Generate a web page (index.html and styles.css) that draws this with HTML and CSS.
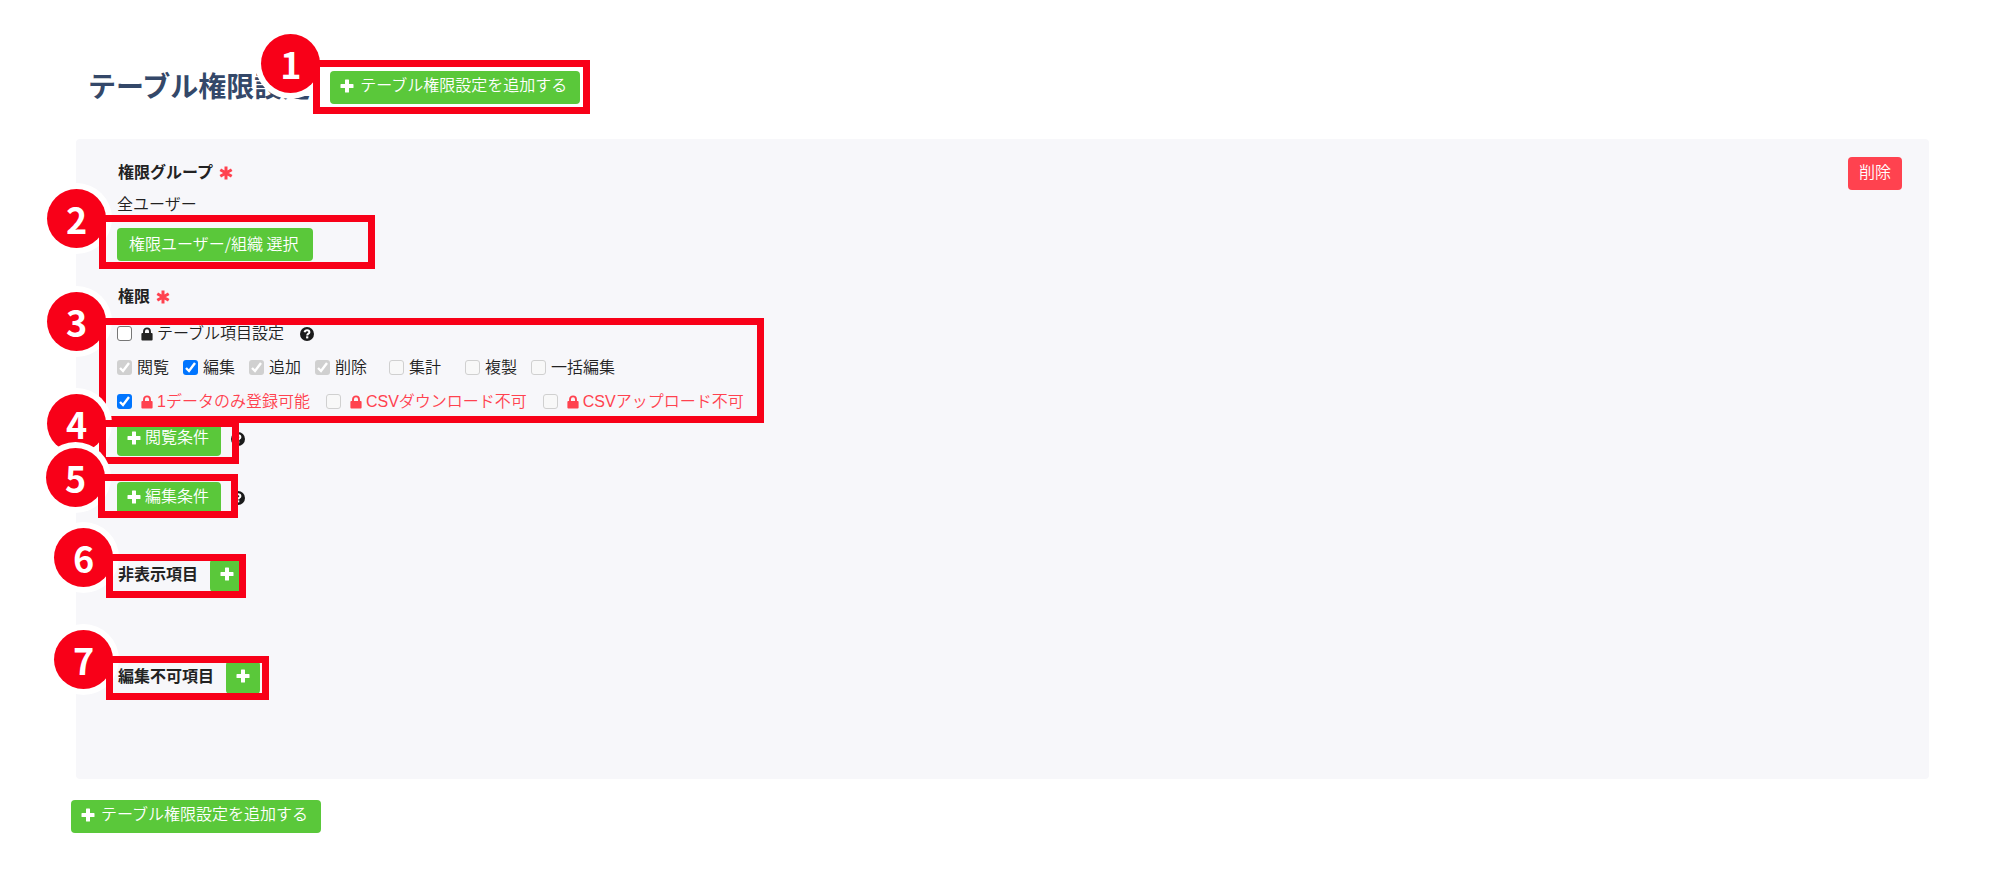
FILE: index.html
```html
<!DOCTYPE html>
<html lang="ja">
<head>
    <meta charset="UTF-8">
    <meta name="viewport" content="width=device-width, initial-scale=1.0">
    <title>テーブル権限設定</title>
    <link rel="stylesheet" href="styles.css">
</head>
<body>

    <svg class="sprite" aria-hidden="true">
        <symbol id="plus" viewBox="0 0 14 14">
            <path d="M5.6 .5h2.8q.6 0 .6.6V5h3.9q.6 0 .6.6v2.8q0 .6-.6.6H9v3.900q0 .6-.6.6H5.600q-.6 0-.6-.6V9H1.100q-.6 0-.6-.6V5.600q0-.6.6-.6H5V1.100q0-.6.6-.6z"/>
        </symbol>
        <symbol id="asterisk" viewBox="0 0 14 14">
            <path d="M7 .5v13M1.300 3.700l11.400 6.600M12.700 3.700L1.300 10.300" fill="none" stroke="currentColor" stroke-width="3"/>
        </symbol>
        <symbol id="lock" viewBox="0 0 12 14">
            <path d="M1.400 6h9.200q1 0 1 1v5.400q0 1-1 1H1.400q-1 0-1-1V7q0-1 1-1z"/>
            <path d="M3 6.500V4.400a3 3 0 0 1 6 0v2.100" fill="none" stroke="currentColor" stroke-width="1.900"/>
        </symbol>
        <symbol id="help" viewBox="0 0 14 14">
            <circle cx="7" cy="7" r="7"/>
            <path d="M4.600 5.200C4.900 3.900 5.900 3.300 7.100 3.300c1.300 0 2.300.8 2.300 1.900C9.400 6.700 7.200 6.600 7.200 8.400" fill="none" stroke="#fff" stroke-width="2"/>
            <rect x="6.100" y="9.300" width="2.200" height="2.100" fill="#fff"/>
        </symbol>
    </svg>

    <header class="page-header">
        <h1>テーブル権限設定</h1>
        <div class="target">
            <button type="button" class="btn btn-add"><svg class="icon"><use href="#plus"/></svg>テーブル権限設定を追加する</button>
            <div class="callout callout-add"><span class="badge">1</span></div>
        </div>
    </header>

    <main class="panel">
        <div class="fields">
            <h2 class="label">権限グループ<svg class="icon required"><use href="#asterisk"/></svg></h2>
            <p class="group-name">全ユーザー</p>
            <div class="target select-group">
                <button type="button" class="btn">権限ユーザー/組織 選択</button>
                <div class="callout callout-group"><span class="badge">2</span></div>
            </div>

            <h2 class="label label-perm">権限<svg class="icon required"><use href="#asterisk"/></svg></h2>
            <div class="target perms">
                <div class="row">
                    <label class="check locked"><input type="checkbox"><svg class="icon lock"><use href="#lock"/></svg>テーブル項目設定</label>
                    <svg class="icon help"><use href="#help"/></svg>
                </div>
                <div class="row">
                    <label class="check"><input type="checkbox" checked disabled>閲覧</label>
                    <label class="check"><input type="checkbox" checked>編集</label>
                    <label class="check"><input type="checkbox" checked disabled>追加</label>
                    <label class="check wide"><input type="checkbox" checked disabled>削除</label>
                    <label class="check wide"><input type="checkbox" disabled>集計</label>
                    <label class="check"><input type="checkbox" disabled>複製</label>
                    <label class="check"><input type="checkbox" disabled>一括編集</label>
                </div>
                <div class="row danger">
                    <label class="check locked"><input type="checkbox" checked><svg class="icon lock"><use href="#lock"/></svg>1データのみ登録可能</label>
                    <label class="check locked"><input type="checkbox" disabled><svg class="icon lock"><use href="#lock"/></svg>CSVダウンロード不可</label>
                    <label class="check locked"><input type="checkbox" disabled><svg class="icon lock"><use href="#lock"/></svg>CSVアップロード不可</label>
                </div>
                <div class="callout callout-perms"><span class="badge">3</span></div>
            </div>

            <div class="target condition view">
                <button type="button" class="btn"><svg class="icon"><use href="#plus"/></svg>閲覧条件</button>
                <svg class="icon help"><use href="#help"/></svg>
                <div class="callout callout-view"><span class="badge">4</span></div>
            </div>
            <div class="target condition edit">
                <button type="button" class="btn"><svg class="icon"><use href="#plus"/></svg>編集条件</button>
                <svg class="icon help"><use href="#help"/></svg>
                <div class="callout callout-edit"><span class="badge">5</span></div>
            </div>

            <div class="target item hidden-items">
                <h2 class="label">非表示項目</h2>
                <button type="button" class="btn" aria-label="追加"><svg class="icon"><use href="#plus"/></svg></button>
                <div class="callout callout-hidden"><span class="badge">6</span></div>
            </div>
            <div class="target item readonly-items">
                <h2 class="label">編集不可項目</h2>
                <button type="button" class="btn" aria-label="追加"><svg class="icon"><use href="#plus"/></svg></button>
                <div class="callout callout-readonly"><span class="badge">7</span></div>
            </div>
        </div>
        <button type="button" class="btn btn-delete">削除</button>
    </main>

    <button type="button" class="btn btn-add btn-bottom"><svg class="icon"><use href="#plus"/></svg>テーブル権限設定を追加する</button>

</body>
</html>
```

FILE: styles.css
```css
* { box-sizing: border-box; }
body { margin: 0; padding: 71px 71px 0; background: #fff; color: #222; font-family: "Liberation Sans", "Noto Sans CJK JP", sans-serif; font-size: 16px; font-weight: 350; line-height: 32px; }
h1, h2, p { margin: 0; }

.sprite { display: none; }
.icon { width: 14px; height: 14px; flex: none; fill: currentColor; }

.page-header { display: flex; align-items: center; gap: 20px; height: 33px; padding-left: 17px; }
.page-header h1 { color: #344869; font-size: 28px; font-weight: bold; white-space: nowrap; }

.btn { display: inline-flex; align-items: center; gap: 4px; height: 33px; padding: 0 12px 2px 10px; border: none; border-radius: 4px; background: #5ac83a; color: #fff; font: inherit; white-space: nowrap; cursor: pointer; }
.btn-add { gap: 6px; padding-right: 13px; }
.btn-delete { padding: 0 11px 2px; background: #ff424f; }
.btn-bottom { margin-top: 21px; }

.panel { display: flex; justify-content: space-between; align-items: flex-start; margin: 35px 0 0 5px; padding: 18px 27px 85px 41px; border-radius: 4px; background: #f7f7fa; }
.label { display: flex; align-items: center; gap: 6px; padding-left: 1px; font-size: 16px; font-weight: bold; }
.required { color: #ff424f; }
.select-group { margin-top: 6px; font-family: "Noto Sans CJK JP", sans-serif; }
.select-group .btn { padding: 0 14px 2px 12px; }
.label-perm { margin-top: 20px; }
.perms { margin-top: 4px; }

.row { display: flex; align-items: center; gap: 14px; height: 34px; }
.row .help { margin-left: 2px; }
.danger { gap: 16px; color: #ff424f; }
.check { display: flex; align-items: center; gap: 5px; }
.locked { gap: 4px; }
.locked input { margin-right: 5px; }
.wide + .wide { margin: 0 10px 0 8px; }
.lock { width: 12px; }
.help { color: #1a1a1a; }

input { appearance: none; width: 15px; height: 15px; margin: 0; border: 1px solid #767676; border-radius: 3px; background: #fff center / 15px 15px no-repeat; }
input:checked { border: none; background-color: #0075ff; background-image: url("data:image/svg+xml,%3Csvg xmlns='http://www.w3.org/2000/svg' viewBox='0 0 15 15'%3E%3Cpath d='M3 8l3 3 6-8' fill='none' stroke='%23fff' stroke-width='2.400'/%3E%3C/svg%3E"); }
input:disabled { border-color: #d0d0d0; background-color: #f8f8f8; }
input:disabled:checked { background-color: #d0d0d0; }

.condition { display: flex; align-items: center; gap: 10px; }
.view { margin-top: 4px; }
.edit { margin-top: 26px; }
.item { display: flex; align-items: center; gap: 12px; }
.item .btn { padding: 0 10px 2px; }
.hidden-items { margin-top: 44px; }
.readonly-items { margin-top: 69px; }

/* numbered callouts */
.target { position: relative; width: fit-content; }
.callout { position: absolute; pointer-events: none; }
.callout::after { content: ""; position: absolute; inset: 0; border: 7px solid #f80018; }
.badge { position: absolute; top: -26px; left: -52px; width: 59px; height: 59px; border-radius: 50%; background: #f80018; box-shadow: 0 0 0 6px #fff; color: #fff; font-family: "Noto Sans CJK JP", sans-serif; font-size: 36px; font-weight: bold; line-height: 59px; text-align: center; }
.callout-add { inset: -11px -10px -10px -17px; }
.callout-group { inset: -12px -62px -8px -18px; }
.callout-perms { inset: 1px -20px -4px -18px; }
.callout-view { inset: -3px 6px -8px -18px; }
.callout-edit { inset: -8px 7px -3px -19px; }
.callout-hidden { inset: -5px -2px -6px -11px; }
.callout-readonly { inset: -5px -9px -6px -11px; }
```
